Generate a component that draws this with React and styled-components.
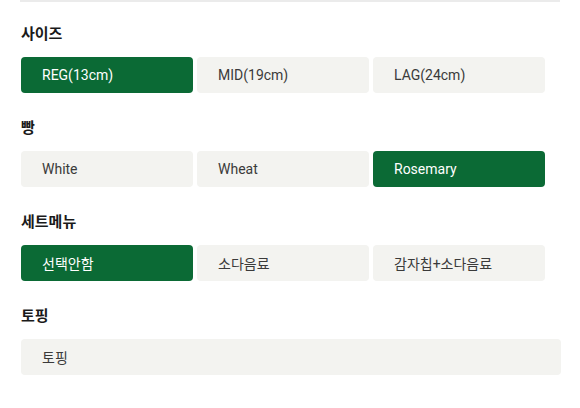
import styled, { createGlobalStyle } from "styled-components";

const Global = createGlobalStyle`
  body {
    margin: 0;
    background: #ffffff;
    font-family: Roboto, "Noto Sans CJK KR", sans-serif;
  }
`;

const Pagina = styled.div`
  width: 580px;
  padding: 0 20px 0 20px;
  box-sizing: border-box;
`;

const Linha = styled.div`
  height: 2px;
  background: #ebebeb;
`;

const Secao = styled.section`
  padding-top: ${(p) => (p.$primeira ? "22px" : "25px")};
`;

const Titulo = styled.h3`
  margin: 0 0 13px 1px;
  font-size: 15px;
  line-height: 20px;
  font-weight: 700;
  color: #1a1a1a;
`;

const Grade = styled.div`
  display: grid;
  grid-template-columns: ${(p) => (p.$cheio ? "540px" : "repeat(3, 172px)")};
  gap: 4px;
  padding-left: 1px;
`;

const Opcao = styled.button`
  height: 36px;
  box-sizing: border-box;
  border: none;
  border-radius: 4px;
  padding: 0 0 0 21px;
  text-align: left;
  font-family: Roboto, "Noto Sans CJK KR", sans-serif;
  font-size: 14px;
  background: ${(p) => (p.$ativo ? "#0b6a35" : "#f3f3f0")};
  color: ${(p) => (p.$ativo ? "#ffffff" : "#3a3a3a")};
  cursor: pointer;
`;

const secoes = [
  { titulo: "사이즈", opcoes: ["REG(13cm)", "MID(19cm)", "LAG(24cm)"], ativo: 0 },
  { titulo: "빵", opcoes: ["White", "Wheat", "Rosemary"], ativo: 2 },
  { titulo: "세트메뉴", opcoes: ["선택안함", "소다음료", "감자칩+소다음료"], ativo: 0 },
  { titulo: "토핑", opcoes: ["토핑"], ativo: -1, cheio: true },
];

export default function App() {
  return (
    <Pagina>
      <Global />
      <Linha />
      {secoes.map((secao, i) => (
        <Secao key={i} $primeira={i === 0}>
          <Titulo>{secao.titulo}</Titulo>
          <Grade $cheio={secao.cheio}>
            {secao.opcoes.map((opcao, j) => (
              <Opcao key={j} $ativo={j === secao.ativo}>
                {opcao}
              </Opcao>
            ))}
          </Grade>
        </Secao>
      ))}
    </Pagina>
  );
}
